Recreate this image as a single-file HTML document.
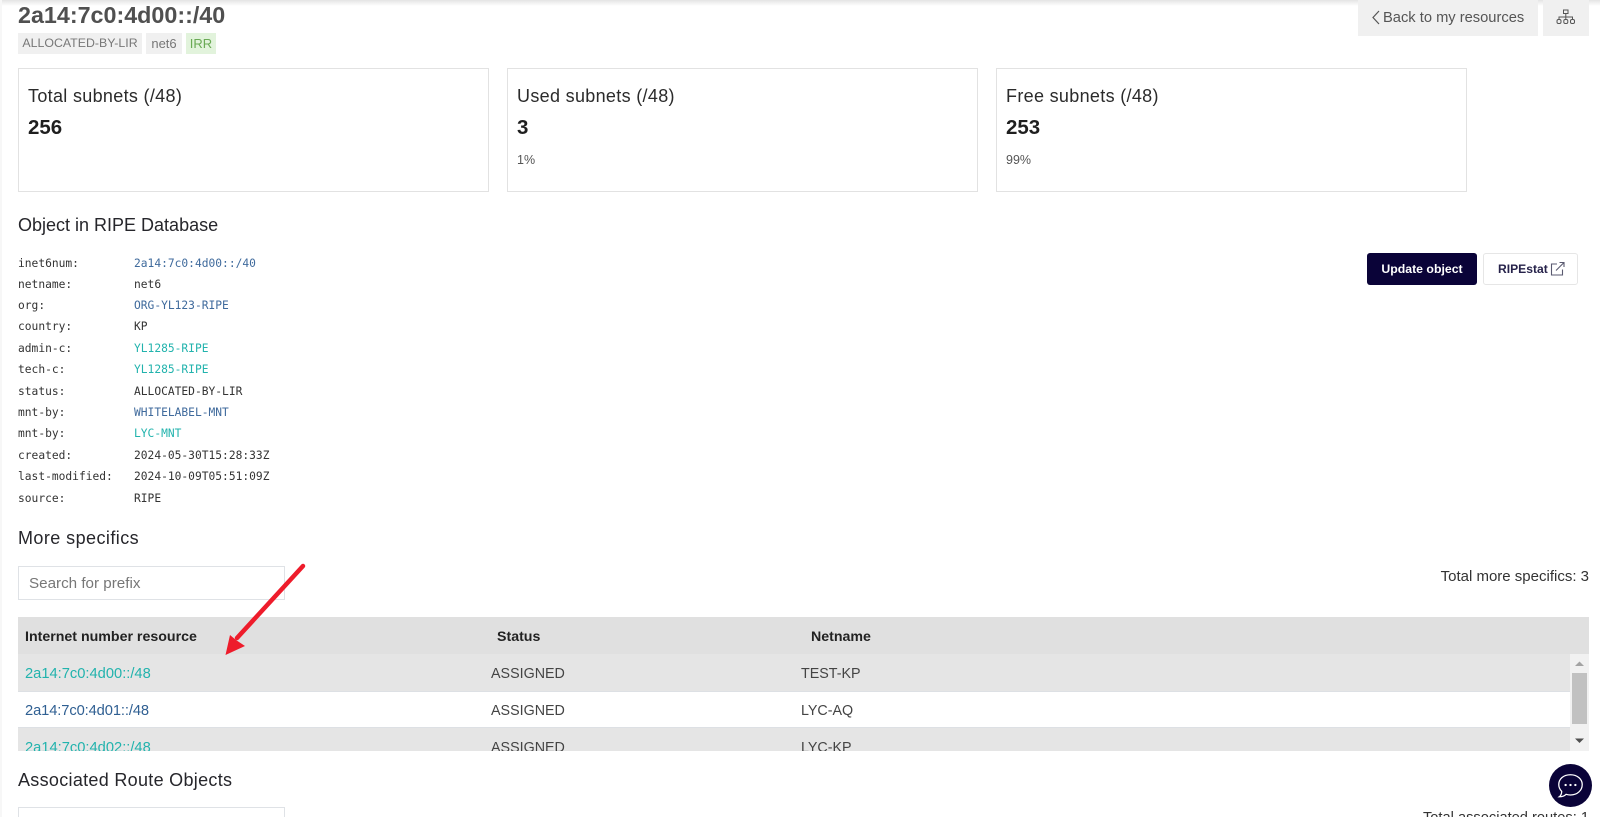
<!DOCTYPE html>
<html><head><meta charset="utf-8"><style>
html{margin:0;padding:0;background:#fff;width:1600px;height:817px;overflow:hidden}
body{margin:0;padding:0;background:#fff;position:relative;width:1600px;height:817px;overflow:hidden;font-family:"Liberation Sans",sans-serif;color:#222}
.a{position:absolute;white-space:nowrap}
.card{position:absolute;top:68px;height:122px;width:469px;border:1px solid #e2e2e2;background:#fff}
.ct{position:absolute;left:9px;top:16px;font-size:18px;letter-spacing:.32px;line-height:22px;color:#2b2b2b}
.cv{position:absolute;left:9px;top:48px;font-size:20.5px;line-height:22px;font-weight:bold;color:#1f1f1f}
.cp{position:absolute;left:9px;top:83px;font-size:12.5px;line-height:16px;color:#555}
.h{font-size:18px;line-height:22px;color:#26262b;left:18px}
.m{font-family:"DejaVu Sans Mono","Liberation Mono",monospace;font-size:11.25px;line-height:16px;color:#333}
.b{color:#3f6a9c}.t{color:#22b3ad}
.bd{position:absolute;top:33px;height:21px;line-height:21px;font-size:13px;text-align:center;background:#f0f0f0;color:#777}
.l{position:absolute;left:7px;font-size:14.7px;line-height:20px}
.s{position:absolute;left:473px;font-size:14.3px;line-height:20px;color:#444}
.n{position:absolute;left:783px;font-size:14.3px;line-height:20px;color:#444}
.th{top:627px;font-size:14.2px;line-height:20px;font-weight:bold;color:#222}
</style></head><body>
<div class="a" style="left:0;top:0;width:1600px;height:6px;background:linear-gradient(#e4e4e4,#fff)"></div>
<div class="a" style="left:0;top:0;width:2px;height:817px;background:#f7f7f7"></div>
<div class="a" style="left:18px;top:-1px;font-size:23.3px;line-height:32px;font-weight:bold;color:#505050">2a14:7c0:4d00::/40</div>
<div class="bd" style="left:18px;width:124px;font-size:12.35px">ALLOCATED-BY-LIR</div>
<div class="bd" style="left:146px;width:36px">net6</div>
<div class="bd" style="left:186px;width:30px;background:#e2f3dc;color:#6aaa55">IRR</div>

<div class="a" style="left:1358px;top:0;width:180px;height:36px;background:#f0f0f0"></div>
<svg class="a" style="left:1371px;top:10px" width="10" height="15" viewBox="0 0 10 15"><path d="M8 1L2 7.5L8 14" fill="none" stroke="#555" stroke-width="1.2"/></svg>
<div class="a" style="left:1383px;top:8px;font-size:14.7px;line-height:20px;color:#555">Back to my resources</div>
<div class="a" style="left:1543px;top:0;width:46px;height:36px;background:#f0f0f0"></div>
<svg class="a" style="left:1556px;top:9px" width="20" height="16" viewBox="0 0 20 16" fill="none" stroke="#555" stroke-width="1"><rect x="7.5" y="1" width="4.500" height="3.500"/><path d="M9.800 4.500V8M3 10.500V8H16.500V10.500M9.800 8V10.500"/><rect x="1" y="10.500" width="4" height="4" rx="1.500"/><rect x="7.800" y="10.500" width="4" height="4" rx="1.500"/><rect x="14.500" y="10.500" width="4" height="4" rx="1.500"/></svg>

<div class="card" style="left:18px"><div class="ct">Total subnets (/48)</div><div class="cv">256</div></div>
<div class="card" style="left:507px"><div class="ct">Used subnets (/48)</div><div class="cv">3</div><div class="cp">1%</div></div>
<div class="card" style="left:996px"><div class="ct">Free subnets (/48)</div><div class="cv">253</div><div class="cp">99%</div></div>

<div class="a h" style="top:214px">Object in RIPE Database</div>

<div class="a m" style="left:18px;top:256px">inet6num:</div><div class="a m b" style="left:134px;top:256px">2a14:7c0:4d00::/40</div>
<div class="a m" style="left:18px;top:277px">netname:</div><div class="a m" style="left:134px;top:277px">net6</div>
<div class="a m" style="left:18px;top:298px">org:</div><div class="a m b" style="left:134px;top:298px">ORG-YL123-RIPE</div>
<div class="a m" style="left:18px;top:319px">country:</div><div class="a m" style="left:134px;top:319px">KP</div>
<div class="a m" style="left:18px;top:341px">admin-c:</div><div class="a m t" style="left:134px;top:341px">YL1285-RIPE</div>
<div class="a m" style="left:18px;top:362px">tech-c:</div><div class="a m t" style="left:134px;top:362px">YL1285-RIPE</div>
<div class="a m" style="left:18px;top:384px">status:</div><div class="a m" style="left:134px;top:384px">ALLOCATED-BY-LIR</div>
<div class="a m" style="left:18px;top:405px">mnt-by:</div><div class="a m b" style="left:134px;top:405px">WHITELABEL-MNT</div>
<div class="a m" style="left:18px;top:426px">mnt-by:</div><div class="a m t" style="left:134px;top:426px">LYC-MNT</div>
<div class="a m" style="left:18px;top:448px">created:</div><div class="a m" style="left:134px;top:448px">2024-05-30T15:28:33Z</div>
<div class="a m" style="left:18px;top:469px">last-modified:</div><div class="a m" style="left:134px;top:469px">2024-10-09T05:51:09Z</div>
<div class="a m" style="left:18px;top:491px">source:</div><div class="a m" style="left:134px;top:491px">RIPE</div>

<div class="a" style="left:1367px;top:253px;width:110px;height:32px;line-height:32px;background:#0a0338;border-radius:3px;color:#fff;font-size:12.3px;font-weight:bold;text-align:center">Update object</div>
<div class="a" style="left:1483px;top:253px;width:93px;height:30px;border:1px solid #e6e6e6;border-radius:3px;background:#fff;color:#26224a;font-size:12.1px;font-weight:bold;line-height:30px"><span style="margin-left:14px">RIPEstat</span></div>
<svg class="a" style="left:1550px;top:261px" width="15" height="16" viewBox="0 0 15 16" fill="none" stroke="#5a5a70" stroke-width="1.1"><path d="M7 3H1.500V14H12.500V8.500"/><path d="M6 9.500L13.500 2M9.500 1.500H14V6"/></svg>

<div class="a h" style="top:527px;letter-spacing:.43px">More specifics</div>
<div class="a" style="left:18px;top:566px;width:265px;height:32px;border:1px solid #dfe2e6;background:#fff"></div>
<div class="a" style="left:29px;top:574px;font-size:15.2px;line-height:20px;color:#777">Search for prefix</div>
<div class="a" style="right:11px;top:567px;font-size:15px;line-height:20px;color:#333">Total more specifics: 3</div>

<div class="a" style="left:18px;top:617px;width:1571px;height:37px;background:#e0e0e0"></div>
<div class="a th" style="left:25px">Internet number resource</div>
<div class="a th" style="left:497px">Status</div>
<div class="a th" style="left:811px">Netname</div>

<div class="a" style="left:18px;top:654px;width:1571px;height:97px;overflow:hidden">
<div class="a" style="left:0;top:0;width:1552px;height:37px;background:#e5e5e5;border-bottom:1px solid #dde0e4"><div class="l t" style="top:10px">2a14:7c0:4d00::/48</div><div class="s" style="top:10px">ASSIGNED</div><div class="n" style="top:10px">TEST-KP</div></div>
<div class="a" style="left:0;top:38px;width:1552px;height:35px;background:#fff;border-bottom:1px solid #dde0e4"><div class="l" style="top:9px;color:#2f5f92;letter-spacing:-.1px">2a14:7c0:4d01::/48</div><div class="s" style="top:9px">ASSIGNED</div><div class="n" style="top:9px">LYC-AQ</div></div>
<div class="a" style="left:0;top:74px;width:1552px;height:37px;background:#e5e5e5"><div class="l t" style="top:10px">2a14:7c0:4d02::/48</div><div class="s" style="top:10px">ASSIGNED</div><div class="n" style="top:10px">LYC-KP</div></div>
<div class="a" style="left:1552px;top:0;width:19px;height:97px;background:#f1f1f1"></div>
<div class="a" style="left:1554px;top:19px;width:15px;height:51px;background:#c1c1c1"></div>
<svg class="a" style="left:1552px;top:0" width="19" height="97"><path d="M5 12L9.500 7.500L14 12Z" fill="#a3a3a3"/><path d="M5 84.500L9.500 89L14 84.500Z" fill="#505050"/></svg>
</div>

<div class="a h" style="top:769px;letter-spacing:.3px">Associated Route Objects</div>
<div class="a" style="left:18px;top:807px;width:265px;height:32px;border:1px solid #dfe2e6;background:#fff"></div>
<div class="a" style="right:11px;top:808px;font-size:14.65px;line-height:20px;color:#333">Total associated routes: 1</div>

<svg class="a" style="left:215px;top:556px" width="100" height="110"><path d="M88 10L22 82" stroke="#ee1c2b" stroke-width="4.500" stroke-linecap="round" fill="none"/><path d="M10.500 99L15 79L21 84L30 90Z" fill="#ee1c2b"/></svg>

<div class="a" style="left:1549px;top:764px;width:43px;height:43px;border-radius:50%;background:#0a0338"></div>
<svg class="a" style="left:1549px;top:764px" width="43" height="43" viewBox="0 0 44 44" fill="none"><path d="M22 11C14.500 11 10 15.500 10 21C10 24 11 26 13 28C13 30 12.500 32 10.500 33.500C13.500 33.500 16 32.500 17.500 31C19 31.500 20.500 31.700 22 31.700C29 31.700 34 27 34 21C34 15.500 29 11 22 11Z" stroke="#fff" stroke-width="1.300"/><circle cx="17" cy="21.500" r="1.200" fill="#fff"/><circle cx="22" cy="21.500" r="1.200" fill="#fff"/><circle cx="27" cy="21.500" r="1.200" fill="#fff"/></svg>
</body></html>
